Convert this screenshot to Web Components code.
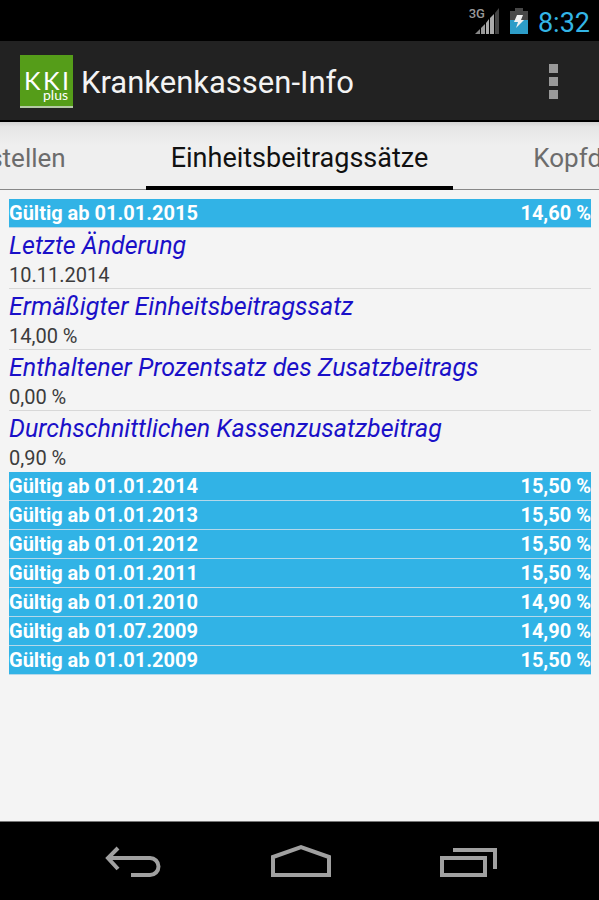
<!DOCTYPE html>
<html lang="de">
<head>
<meta charset="utf-8">
<meta name="viewport" content="width=device-width, initial-scale=1">
<title>Krankenkassen-Info</title>
<style>
    body {
        margin: 0;
        min-height: 100vh;
        display: flex;
        flex-direction: column;
        background: #f4f4f4;
        font-family: Roboto, "Noto Sans", sans-serif;
    }
    main {
        flex: 1;
        padding: 9px 8px 9px 9px;
    }
</style>
</head>
<body>
    <status-bar time="8:32"></status-bar>
    <action-bar>Krankenkassen-Info</action-bar>
    <tab-strip>
        <tab-item>stellen</tab-item>
        <tab-item selected>Einheitsbeitragssätze</tab-item>
        <tab-item>Kopfd</tab-item>
    </tab-strip>
    <main>
        <rate-group label="Gültig ab 01.01.2015" rate="14,60 %" open>
            <rate-detail label="Letzte Änderung">10.11.2014</rate-detail>
            <rate-detail label="Ermäßigter Einheitsbeitragssatz">14,00 %</rate-detail>
            <rate-detail label="Enthaltener Prozentsatz des Zusatzbeitrags">0,00 %</rate-detail>
            <rate-detail label="Durchschnittlichen Kassenzusatzbeitrag">0,90 %</rate-detail>
        </rate-group>
        <rate-group label="Gültig ab 01.01.2014" rate="15,50 %"></rate-group>
        <rate-group label="Gültig ab 01.01.2013" rate="15,50 %"></rate-group>
        <rate-group label="Gültig ab 01.01.2012" rate="15,50 %"></rate-group>
        <rate-group label="Gültig ab 01.01.2011" rate="15,50 %"></rate-group>
        <rate-group label="Gültig ab 01.01.2010" rate="14,90 %"></rate-group>
        <rate-group label="Gültig ab 01.07.2009" rate="14,90 %"></rate-group>
        <rate-group label="Gültig ab 01.01.2009" rate="15,50 %"></rate-group>
    </main>
    <nav-bar></nav-bar>

<script>
class StatusBar extends HTMLElement {
    constructor() {
        super();
        this.attachShadow({ mode: "open" });
        this.shadowRoot.innerHTML = `
        <style>
            :host {
                display: flex;
                align-items: center;
                justify-content: flex-end;
                gap: 10px;
                height: 41px;
                padding: 0 9px;
                background: #000;
                color: #33b5e5;
            }
            .signal { display: flex; }
            .network {
                font-size: 13px;
                font-weight: 500;
                line-height: 14px;
                color: #999;
                margin-right: -11px;
            }
            svg { display: block; }
            time { font-size: 27px; line-height: 32px; padding-top: 4px; }
        </style>
        <span class="signal">
            <span class="network">3G</span>
            <svg width="26" height="28" viewBox="0 0 26 28" aria-hidden="true">
                <path d="M1 27 6 22V27Z" fill="#888"/>
                <path d="M7 21 11 17V27H7Z" fill="#999"/>
                <path d="M12 16 15 12V27H12Z" fill="#aaa"/>
                <path d="M16 11 20 7V27H16Z" fill="#aaa"/>
                <path d="M21 6 25 1V27H21Z" fill="#444"/>
            </svg>
        </span>
        <svg width="18" height="28" viewBox="0 0 18 28" aria-hidden="true">
            <path d="M5 1H13V4H18V14H0V4H5Z" fill="#484848"/>
            <path d="M0 13H18V27H0Z" fill="#2d9dc8"/>
            <path d="M7 8H13L11 13H14L6 21 8 15H4Z" fill="#f2f2f2"/>
        </svg>
        <time></time>
        `;
    }
    connectedCallback() {
        this.shadowRoot.querySelector("time").textContent = this.getAttribute("time");
    }
}
customElements.define("status-bar", StatusBar);

class ActionBar extends HTMLElement {
    constructor() {
        super();
        this.attachShadow({ mode: "open" });
        this.shadowRoot.innerHTML = `
        <style>
            :host {
                display: block;
                background: #222;
                border-bottom: 2px solid #000;
                color: #f3f3f3;
            }
            header {
                display: flex;
                align-items: center;
                gap: 8px;
                height: 79px;
                padding: 2px 30px 0 20px;
                box-sizing: border-box;
            }
            .logo {
                display: block;
                flex: none;
            }
            .logo text { fill: #fff; font-family: Lato, sans-serif; }
            h1 {
                flex: 1;
                margin: 0;
                padding-top: 2px;
                font-size: 31px;
                font-weight: 400;
                line-height: 40px;
                white-space: nowrap;
            }
            button {
                padding: 0 10px;
                border: 0;
                background: none;
                color: #999;
            }
            button svg { display: block; }
        </style>
        <header>
            <svg class="logo" width="53" height="53" viewBox="0 0 53 53" aria-hidden="true">
                <rect width="53" height="53" fill="#559d19"/>
                <rect y="51" width="53" height="2" fill="#b5c9a5"/>
                <text x="4 23 42" y="35" font-size="25">KKI</text>
                <text x="23" y="45" font-size="14">plus</text>
            </svg>
            <h1><slot></slot></h1>
            <button type="button" aria-label="Weitere Optionen">
                <svg width="10" height="36" viewBox="0 0 10 36" fill="currentColor">
                    <rect y="0" width="9" height="9"/>
                    <rect y="13" width="9" height="9"/>
                    <rect y="26" width="9" height="9"/>
                </svg>
            </button>
        </header>
        `;
    }
}
customElements.define("action-bar", ActionBar);

class TabStrip extends HTMLElement {
    constructor() {
        super();
        this.attachShadow({ mode: "open" });
        this.shadowRoot.innerHTML = `
        <style>
            :host {
                display: block;
                background: linear-gradient(#d4d4d4, #e6e6e6 5px, #efefef 24px);
            }
            nav {
                display: grid;
                grid-template-columns: minmax(0, 1fr) auto minmax(0, 1fr);
                height: 68px;
            }
        </style>
        <nav><slot></slot></nav>
        `;
    }
}
customElements.define("tab-strip", TabStrip);

class TabItem extends HTMLElement {
    constructor() {
        super();
        this.attachShadow({ mode: "open" });
        this.shadowRoot.innerHTML = `
        <style>
            :host {
                display: flex;
                overflow: hidden;
                box-sizing: border-box;
                border-bottom: 1px solid #888;
            }
            :host(:first-child) { justify-content: flex-end; padding-right: 80px; }
            :host(:last-child) { padding-left: 80px; }
            :host([selected]) { padding: 0 25px; border-bottom: 4px solid #000; }
            button {
                flex: none;
                padding: 5px 0 0;
                border: 0;
                background: none;
                color: #6c6c6c;
                font: inherit;
                font-size: 26px;
                line-height: 32px;
                height: 67px;
                white-space: nowrap;
            }
            :host([selected]) button { color: #111; font-size: 27px; }
        </style>
        <button type="button"><slot></slot></button>
        `;
    }
    connectedCallback() {
        if (this.hasAttribute("selected")) {
            this.shadowRoot.querySelector("button").setAttribute("aria-current", "page");
        }
    }
}
customElements.define("tab-item", TabItem);

class RateGroup extends HTMLElement {
    constructor() {
        super();
        this.attachShadow({ mode: "open" });
        this.shadowRoot.innerHTML = `
        <style>
            :host { display: block; }
            button {
                display: flex;
                justify-content: space-between;
                width: 100%;
                padding: 0;
                border: 0;
                border-bottom: 1px solid #b4d8ea;
                background: #31b3e6;
                color: #fff;
                font: inherit;
                font-size: 20px;
                font-weight: 700;
                line-height: 28px;
            }
            .details { display: none; }
            :host([open]) .details { display: block; }
        </style>
        <button type="button"><span class="label"></span><span class="rate"></span></button>
        <div class="details"><slot></slot></div>
        `;
        this.button = this.shadowRoot.querySelector("button");
        this.button.addEventListener("click", () => {
            this.toggleAttribute("open");
            this._update();
        });
    }
    connectedCallback() {
        this.shadowRoot.querySelector(".label").textContent = this.getAttribute("label");
        this.shadowRoot.querySelector(".rate").textContent = this.getAttribute("rate");
        this._update();
    }
    _update() {
        this.button.setAttribute("aria-expanded", this.hasAttribute("open"));
    }
}
customElements.define("rate-group", RateGroup);

class RateDetail extends HTMLElement {
    constructor() {
        super();
        this.attachShadow({ mode: "open" });
        this.shadowRoot.innerHTML = `
        <style>
            :host {
                display: block;
                border-bottom: 1px solid #d8d8d8;
            }
            :host(:last-child) { border-bottom-color: transparent; }
            dl, dd { margin: 0; }
            dl { padding-top: 2px; }
            dt {
                color: #1a10c8;
                font-size: 25px;
                font-style: italic;
                line-height: 32px;
            }
            dd {
                color: #3c3c3c;
                font-size: 20px;
                line-height: 26px;
            }
        </style>
        <dl>
            <dt></dt>
            <dd><slot></slot></dd>
        </dl>
        `;
    }
    connectedCallback() {
        this.shadowRoot.querySelector("dt").textContent = this.getAttribute("label");
    }
}
customElements.define("rate-detail", RateDetail);

class NavBar extends HTMLElement {
    constructor() {
        super();
        this.attachShadow({ mode: "open" });
        this.shadowRoot.innerHTML = `
        <style>
            :host {
                display: block;
                border-top: 1px solid #777;
                background: #000;
            }
            nav {
                display: flex;
                justify-content: center;
                gap: 104px;
                height: 78px;
                align-items: center;
            }
            button {
                padding: 0;
                border: 0;
                background: none;
                color: #a0a0a0;
            }
            svg {
                display: block;
                fill: none;
                stroke: currentColor;
                stroke-width: 4;
            }
        </style>
        <nav>
            <button type="button" aria-label="Zurück">
                <svg width="64" height="34" viewBox="0 0 64 34"><path d="M18 4 8 14 18 25M8 14H50A8 8 0 0 1 50 31H31"/></svg>
            </button>
            <button type="button" aria-label="Startseite">
                <svg width="64" height="34" viewBox="0 0 64 34"><path d="M5 31V13L33 3 61 13V31Z"/></svg>
            </button>
            <button type="button" aria-label="Letzte Apps">
                <svg width="64" height="34" viewBox="0 0 64 34"><path d="M6 14H49V31H6ZM17 6H59V25"/></svg>
            </button>
        </nav>
        `;
    }
}
customElements.define("nav-bar", NavBar);
</script>
</body>
</html>
